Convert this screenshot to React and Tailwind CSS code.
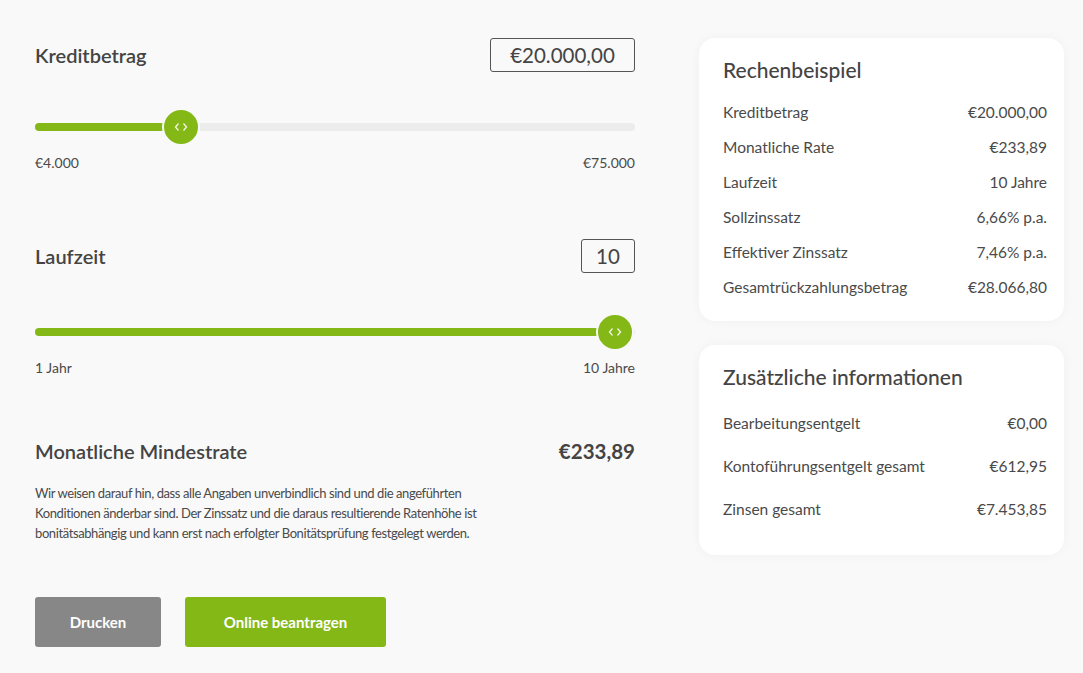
const GREEN = 'bg-[#84b817]';

function Thumb() {
  return (
    <span className="absolute top-1/2 -translate-x-1/2 -translate-y-1/2 w-[38px] h-[38px] rounded-full bg-[#84b817] border-2 border-[#f9f9f9] flex items-center justify-center">
      <svg width="14" height="10" viewBox="0 0 14 10" fill="none" stroke="#f2f7e4" strokeWidth="1.3">
        <path d="M4.5 1.5 1.5 5l3 3.5" />
        <path d="M9.5 1.5 12.5 5l-3 3.5" />
      </svg>
    </span>
  );
}

function Slider({ pct, min, max }) {
  return (
    <div>
      <div className="relative h-2 rounded-full bg-[#ececec]">
        <div className={`absolute left-0 top-0 h-2 rounded-full ${GREEN}`} style={{ width: `${pct}%` }} />
        <div className="absolute inset-y-0 left-0" style={{ left: `${pct}%` }}>
          <Thumb />
        </div>
      </div>
      <div className="flex justify-between mt-[21px] text-[14px] text-[#4a4a4a]">
        <span>{min}</span>
        <span>{max}</span>
      </div>
    </div>
  );
}

function Card({ title, rows, rowGap, listMt, pb }) {
  return (
    <div className={`bg-white rounded-[16px] shadow-[0_0_12px_rgba(0,0,0,0.04)] pl-6 pr-[17px] pt-[18px] ${pb}`}>
      <h3 className="text-[21px] leading-[28px] font-medium text-[#444]">{title}</h3>
      <div className={`flex flex-col ${listMt} ${rowGap}`}>
        {rows.map(([label, value]) => (
          <div key={label} className="flex justify-between text-[15.5px] leading-[24px] text-[#4a4a4a]">
            <span>{label}</span>
            <span>{value}</span>
          </div>
        ))}
      </div>
    </div>
  );
}

export default function App() {
  return (
    <div className="min-h-screen bg-[#f9f9f9] font-['Lato',sans-serif] text-[#4a4a4a]">
      <div className="flex gap-16 pl-[35px] pr-[19px] pt-[38px]">
        <div className="w-[600px] shrink-0">
          <div className="flex items-center justify-between">
            <h2 className="text-[20px] font-semibold text-[#444]">Kreditbetrag</h2>
            <div className="w-[145px] h-[34px] border border-[#555] rounded-[3px] flex items-center justify-center text-[20.5px] text-[#444]">
              €20.000,00
            </div>
          </div>
          <div className="mt-[51px]">
            <Slider pct={24.4} min="€4.000" max="€75.000" />
          </div>

          <div className="mt-[66px] flex items-center justify-between">
            <h2 className="text-[20px] font-semibold text-[#444]">Laufzeit</h2>
            <div className="w-[54px] h-[34px] border border-[#555] rounded-[3px] flex items-center justify-center text-[20.5px] text-[#444]">
              10
            </div>
          </div>
          <div className="mt-[55px]">
            <Slider pct={96.7} min="1 Jahr" max="10 Jahre" />
          </div>

          <div className="mt-[58px] flex items-center justify-between">
            <h2 className="text-[20px] font-semibold text-[#444]">Monatliche Mindestrate</h2>
            <span className="text-[20.5px] font-bold text-[#444]">€233,89</span>
          </div>
          <p className="mt-[16px] text-[13px] tracking-[-0.4px] leading-[20px] text-[#4a4a4a]">
            Wir weisen darauf hin, dass alle Angaben unverbindlich sind und die angeführten<br />
            Konditionen änderbar sind. Der Zinssatz und die daraus resultierende Ratenhöhe ist<br />
            bonitätsabhängig und kann erst nach erfolgter Bonitätsprüfung festgelegt werden.
          </p>

          <div className="mt-[54px] flex gap-6">
            <button className="w-[126px] h-[50px] rounded-[3px] bg-[#878787] text-white font-bold text-[15px]">
              Drucken
            </button>
            <button className={`w-[201px] h-[50px] rounded-[3px] ${GREEN} text-white font-bold text-[15px]`}>
              Online beantragen
            </button>
          </div>
        </div>

        <div className="flex-1 flex flex-col gap-6">
          <Card
            title="Rechenbeispiel"
            rowGap="gap-[11px]"
            listMt="mt-[16px]"
            pb="pb-[22px]"
            rows={[
              ['Kreditbetrag', '€20.000,00'],
              ['Monatliche Rate', '€233,89'],
              ['Laufzeit', '10 Jahre'],
              ['Sollzinssatz', '6,66% p.a.'],
              ['Effektiver Zinssatz', '7,46% p.a.'],
              ['Gesamtrückzahlungsbetrag', '€28.066,80'],
            ]}
          />
          <Card
            title="Zusätzliche informationen"
            rowGap="gap-[19px]"
            listMt="mt-[20px]"
            pb="pb-[34px]"
            rows={[
              ['Bearbeitungsentgelt', '€0,00'],
              ['Kontoführungsentgelt gesamt', '€612,95'],
              ['Zinsen gesamt', '€7.453,85'],
            ]}
          />
        </div>
      </div>
    </div>
  );
}
